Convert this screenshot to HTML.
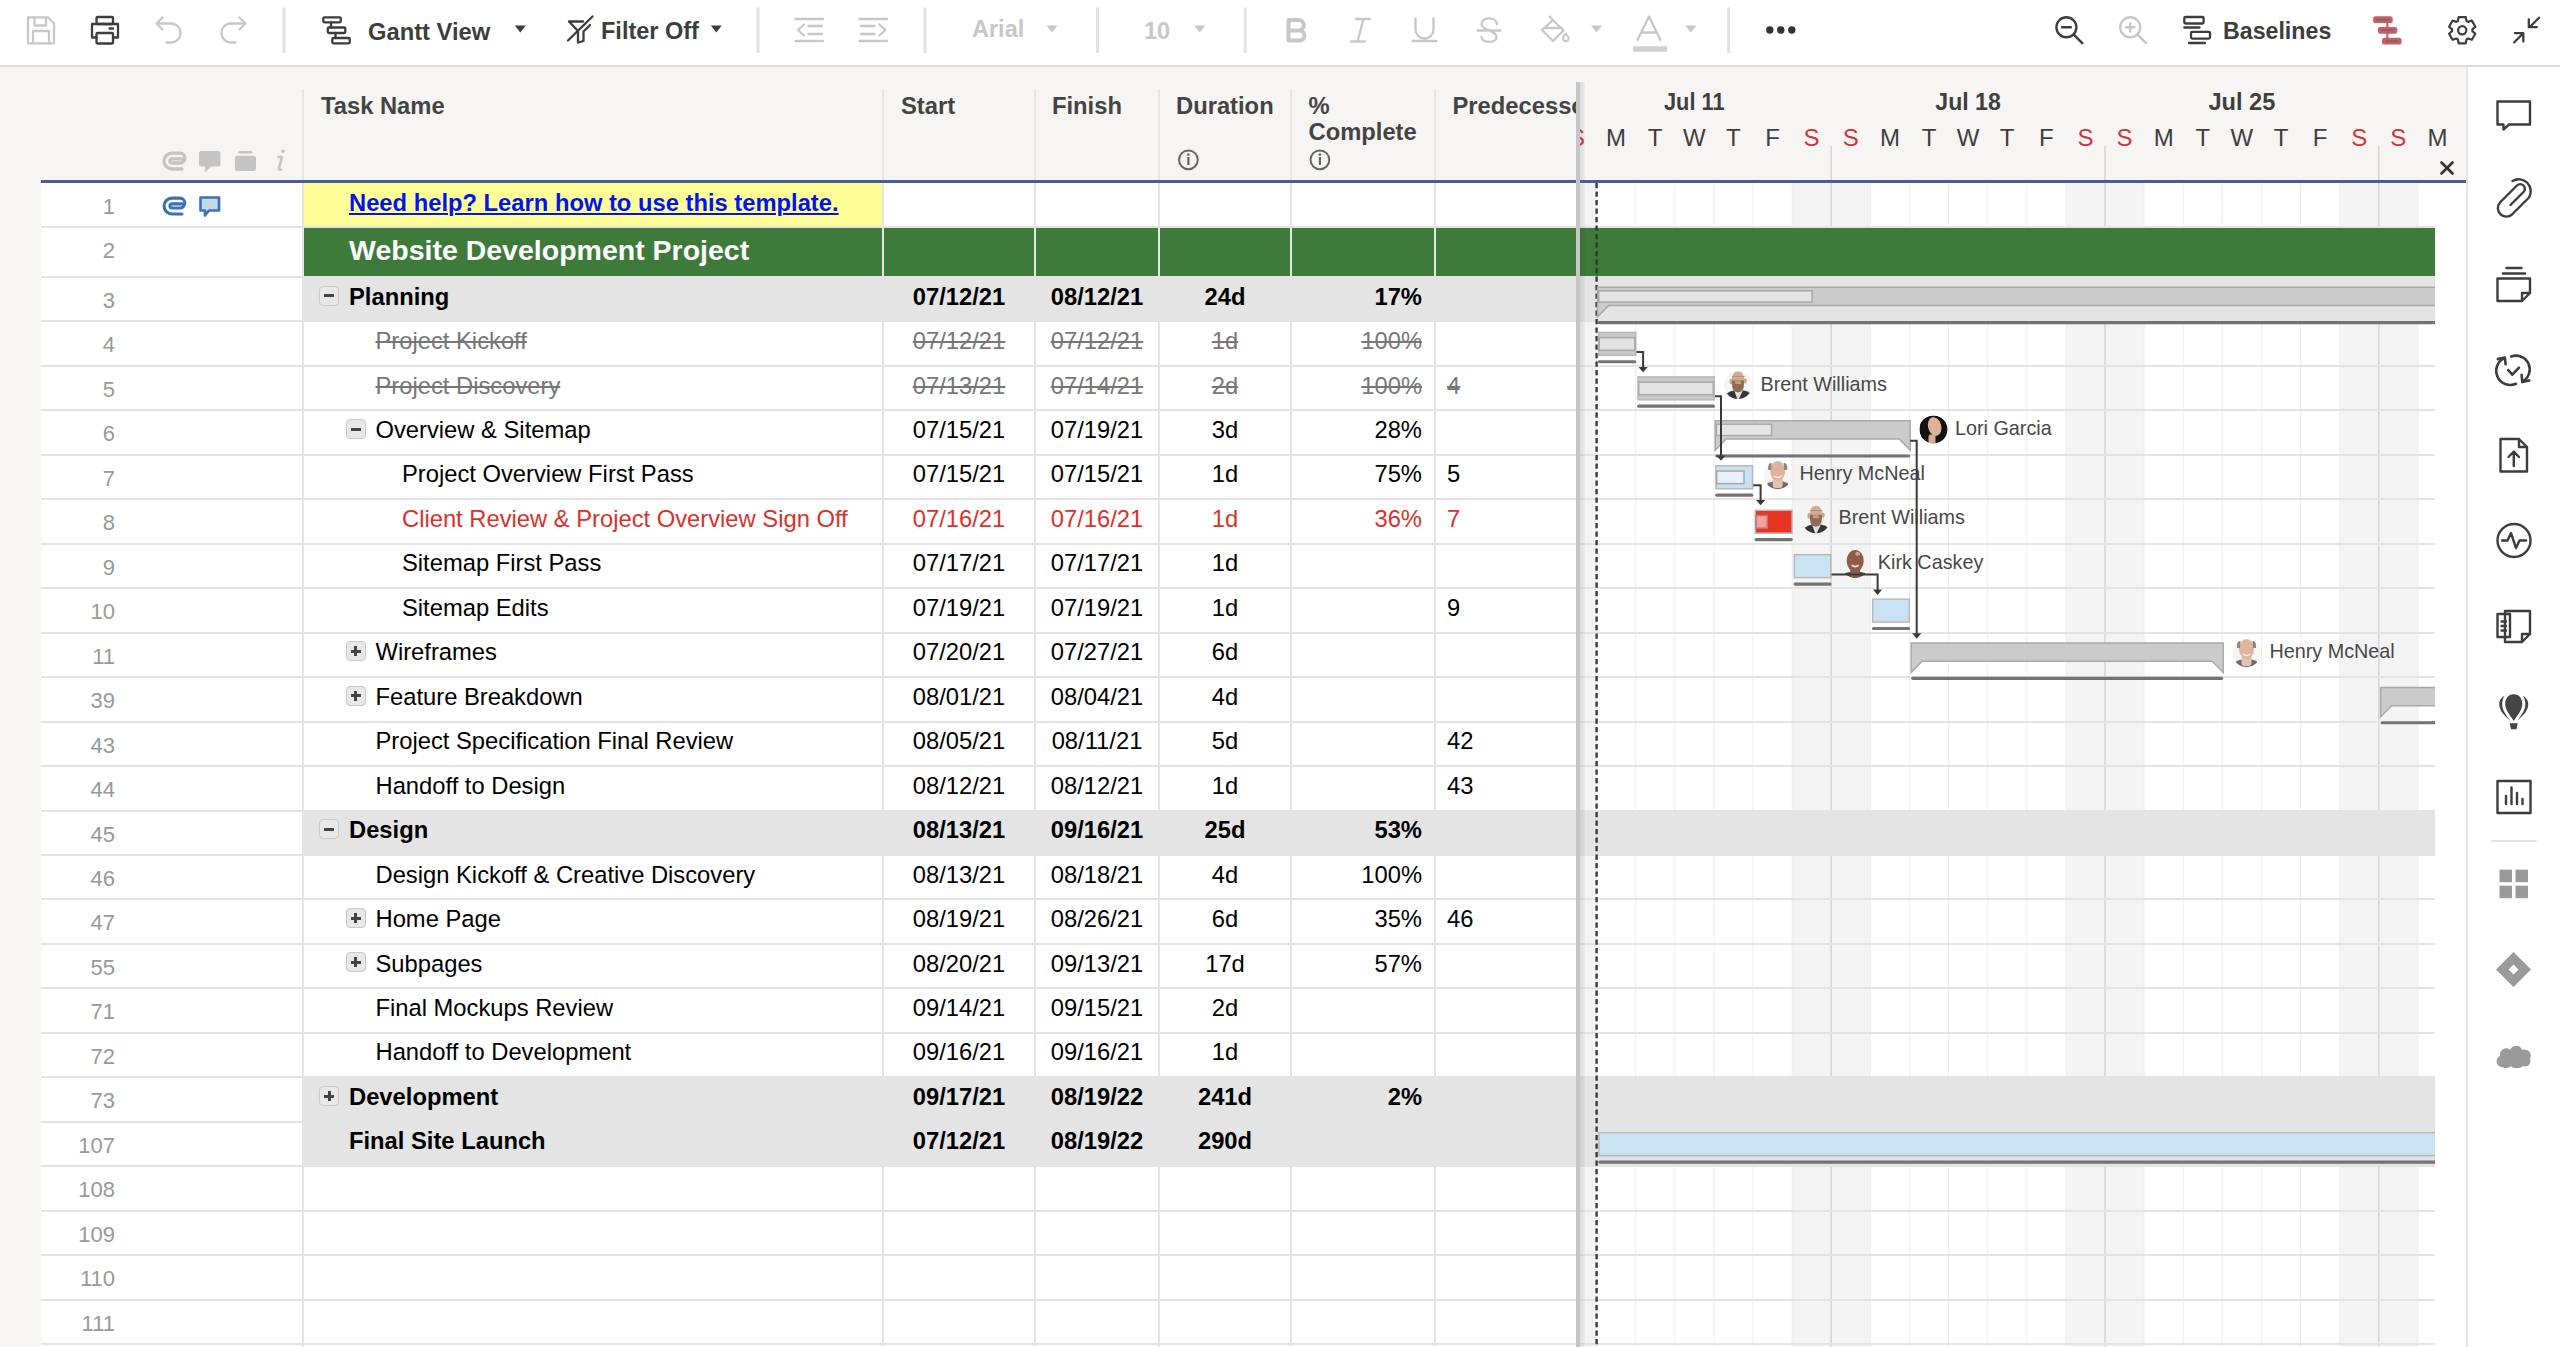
<!DOCTYPE html><html><head><meta charset="utf-8"><style>
*{box-sizing:border-box}
html,body{margin:0;padding:0}
body{width:2560px;height:1347px;overflow:hidden;position:relative;background:#f6f5f3;font-family:'Liberation Sans', sans-serif;}
.a{position:absolute}
.t{position:absolute;white-space:nowrap;line-height:normal}
</style></head><body>
<div class="a" style="left:0;top:0;width:2560px;height:66px;background:#fff"></div>
<div class="a" style="left:0;top:65px;width:2560px;height:2px;background:#dcdcdc"></div>
<div class="a" style="left:41px;top:183px;width:1535px;height:1164px;background:#fff"></div>
<div class="a" style="left:1580px;top:183px;width:886px;height:1164px;background:#fff"></div>
<div class="a" style="left:2466px;top:67px;width:94px;height:1280px;background:#fff;border-left:2px solid #e6e6e6"></div>
<div class="a" style="left:304px;top:183px;width:578px;height:43px;background:#fffd96"></div>
<div class="a" style="left:41px;top:226px;width:1535px;height:2px;background:#e4e4e4"></div>
<div class="a" style="left:304px;top:228px;width:1272px;height:48px;background:#3e7b3a"></div>
<div class="a" style="left:41px;top:276px;width:1535px;height:2px;background:#e4e4e4"></div>
<div class="a" style="left:304px;top:278px;width:1272px;height:42px;background:#e4e4e4"></div>
<div class="a" style="left:41px;top:320px;width:1535px;height:2px;background:#e4e4e4"></div>
<div class="a" style="left:41px;top:365px;width:1535px;height:2px;background:#e4e4e4"></div>
<div class="a" style="left:41px;top:409px;width:1535px;height:2px;background:#e4e4e4"></div>
<div class="a" style="left:41px;top:454px;width:1535px;height:2px;background:#e4e4e4"></div>
<div class="a" style="left:41px;top:498px;width:1535px;height:2px;background:#e4e4e4"></div>
<div class="a" style="left:41px;top:543px;width:1535px;height:2px;background:#e4e4e4"></div>
<div class="a" style="left:41px;top:587px;width:1535px;height:2px;background:#e4e4e4"></div>
<div class="a" style="left:41px;top:632px;width:1535px;height:2px;background:#e4e4e4"></div>
<div class="a" style="left:41px;top:676px;width:1535px;height:2px;background:#e4e4e4"></div>
<div class="a" style="left:41px;top:721px;width:1535px;height:2px;background:#e4e4e4"></div>
<div class="a" style="left:41px;top:765px;width:1535px;height:2px;background:#e4e4e4"></div>
<div class="a" style="left:41px;top:810px;width:1535px;height:2px;background:#e4e4e4"></div>
<div class="a" style="left:304px;top:812px;width:1272px;height:42px;background:#e4e4e4"></div>
<div class="a" style="left:41px;top:854px;width:1535px;height:2px;background:#e4e4e4"></div>
<div class="a" style="left:41px;top:898px;width:1535px;height:2px;background:#e4e4e4"></div>
<div class="a" style="left:41px;top:943px;width:1535px;height:2px;background:#e4e4e4"></div>
<div class="a" style="left:41px;top:987px;width:1535px;height:2px;background:#e4e4e4"></div>
<div class="a" style="left:41px;top:1032px;width:1535px;height:2px;background:#e4e4e4"></div>
<div class="a" style="left:41px;top:1076px;width:1535px;height:2px;background:#e4e4e4"></div>
<div class="a" style="left:304px;top:1078px;width:1272px;height:43px;background:#e4e4e4"></div>
<div class="a" style="left:41px;top:1121px;width:1535px;height:2px;background:#e4e4e4"></div>
<div class="a" style="left:304px;top:1123px;width:1272px;height:42px;background:#e4e4e4"></div>
<div class="a" style="left:41px;top:1165px;width:1535px;height:2px;background:#e4e4e4"></div>
<div class="a" style="left:41px;top:1210px;width:1535px;height:2px;background:#e4e4e4"></div>
<div class="a" style="left:41px;top:1254px;width:1535px;height:2px;background:#e4e4e4"></div>
<div class="a" style="left:41px;top:1299px;width:1535px;height:2px;background:#e4e4e4"></div>
<div class="a" style="left:41px;top:1343px;width:1535px;height:2px;background:#e4e4e4"></div>
<div class="a" style="left:302px;top:183px;width:2px;height:1164px;background:#e4e4e4"></div>
<div class="a" style="left:302px;top:89px;width:2px;height:91px;background:#e6e6e4"></div>
<div class="a" style="left:882px;top:183px;width:2px;height:1164px;background:#e4e4e4"></div>
<div class="a" style="left:882px;top:89px;width:2px;height:91px;background:#e6e6e4"></div>
<div class="a" style="left:1034px;top:183px;width:2px;height:1164px;background:#e4e4e4"></div>
<div class="a" style="left:1034px;top:89px;width:2px;height:91px;background:#e6e6e4"></div>
<div class="a" style="left:1158px;top:183px;width:2px;height:1164px;background:#e4e4e4"></div>
<div class="a" style="left:1158px;top:89px;width:2px;height:91px;background:#e6e6e4"></div>
<div class="a" style="left:1290px;top:183px;width:2px;height:1164px;background:#e4e4e4"></div>
<div class="a" style="left:1290px;top:89px;width:2px;height:91px;background:#e6e6e4"></div>
<div class="a" style="left:1434px;top:183px;width:2px;height:1164px;background:#e4e4e4"></div>
<div class="a" style="left:1434px;top:89px;width:2px;height:91px;background:#e6e6e4"></div>
<div class="t" style="right:2445px;top:194px;font-size:22px;color:#999">1</div>
<div class="t" style="left:349px;top:189px;font-size:23.75px;font-weight:bold;color:#0014ef;text-decoration:underline;text-decoration-thickness:2px;text-underline-offset:2px">Need help? Learn how to use this template.</div>
<div class="t" style="right:2445px;top:238px;font-size:22px;color:#999">2</div>
<div class="t" style="left:349px;top:234px;font-size:28.5px;font-weight:bold;color:#fff">Website Development Project</div>
<div class="t" style="right:2445px;top:288px;font-size:22px;color:#999">3</div>
<div class="a" style="left:319.0px;top:285.5px;width:20px;height:20px;border:1.5px solid #c9c9c9;border-radius:4px;background:#e8e8e8"></div>
<div class="a" style="left:324.0px;top:294.2px;width:10px;height:3px;background:#444"></div>
<div class="t" style="left:349.0px;top:283px;font-size:23.75px;font-weight:bold;color:#000;">Planning</div>
<div class="t" style="left:884px;width:150px;text-align:center;top:283px;font-size:23.75px;font-weight:bold;color:#000;">07/12/21</div>
<div class="t" style="left:1036px;width:122px;text-align:center;top:283px;font-size:23.75px;font-weight:bold;color:#000;">08/12/21</div>
<div class="t" style="left:1160px;width:130px;text-align:center;top:283px;font-size:23.75px;font-weight:bold;color:#000;">24d</div>
<div class="t" style="right:1138px;top:283px;font-size:23.75px;font-weight:bold;color:#000;">17%</div>
<div class="t" style="left:1447px;top:283px;font-size:23.75px;font-weight:bold;color:#000;"></div>
<div class="t" style="right:2445px;top:332px;font-size:22px;color:#999">4</div>
<div class="t" style="left:375.5px;top:327px;font-size:23.75px;font-weight:normal;color:#777;text-decoration:line-through;text-decoration-thickness:2px;">Project Kickoff</div>
<div class="t" style="left:884px;width:150px;text-align:center;top:327px;font-size:23.75px;font-weight:normal;color:#777;text-decoration:line-through;text-decoration-thickness:2px;">07/12/21</div>
<div class="t" style="left:1036px;width:122px;text-align:center;top:327px;font-size:23.75px;font-weight:normal;color:#777;text-decoration:line-through;text-decoration-thickness:2px;">07/12/21</div>
<div class="t" style="left:1160px;width:130px;text-align:center;top:327px;font-size:23.75px;font-weight:normal;color:#777;text-decoration:line-through;text-decoration-thickness:2px;">1d</div>
<div class="t" style="right:1138px;top:327px;font-size:23.75px;font-weight:normal;color:#777;text-decoration:line-through;text-decoration-thickness:2px;">100%</div>
<div class="t" style="left:1447px;top:327px;font-size:23.75px;font-weight:normal;color:#777;text-decoration:line-through;text-decoration-thickness:2px;"></div>
<div class="t" style="right:2445px;top:377px;font-size:22px;color:#999">5</div>
<div class="t" style="left:375.5px;top:372px;font-size:23.75px;font-weight:normal;color:#777;text-decoration:line-through;text-decoration-thickness:2px;">Project Discovery</div>
<div class="t" style="left:884px;width:150px;text-align:center;top:372px;font-size:23.75px;font-weight:normal;color:#777;text-decoration:line-through;text-decoration-thickness:2px;">07/13/21</div>
<div class="t" style="left:1036px;width:122px;text-align:center;top:372px;font-size:23.75px;font-weight:normal;color:#777;text-decoration:line-through;text-decoration-thickness:2px;">07/14/21</div>
<div class="t" style="left:1160px;width:130px;text-align:center;top:372px;font-size:23.75px;font-weight:normal;color:#777;text-decoration:line-through;text-decoration-thickness:2px;">2d</div>
<div class="t" style="right:1138px;top:372px;font-size:23.75px;font-weight:normal;color:#777;text-decoration:line-through;text-decoration-thickness:2px;">100%</div>
<div class="t" style="left:1447px;top:372px;font-size:23.75px;font-weight:normal;color:#777;text-decoration:line-through;text-decoration-thickness:2px;">4</div>
<div class="t" style="right:2445px;top:421px;font-size:22px;color:#999">6</div>
<div class="a" style="left:345.5px;top:418.9px;width:20px;height:20px;border:1.5px solid #c9c9c9;border-radius:4px;background:#e8e8e8"></div>
<div class="a" style="left:350.5px;top:427.6px;width:10px;height:3px;background:#444"></div>
<div class="t" style="left:375.5px;top:416px;font-size:23.75px;font-weight:normal;color:#000;">Overview &amp; Sitemap</div>
<div class="t" style="left:884px;width:150px;text-align:center;top:416px;font-size:23.75px;font-weight:normal;color:#000;">07/15/21</div>
<div class="t" style="left:1036px;width:122px;text-align:center;top:416px;font-size:23.75px;font-weight:normal;color:#000;">07/19/21</div>
<div class="t" style="left:1160px;width:130px;text-align:center;top:416px;font-size:23.75px;font-weight:normal;color:#000;">3d</div>
<div class="t" style="right:1138px;top:416px;font-size:23.75px;font-weight:normal;color:#000;">28%</div>
<div class="t" style="left:1447px;top:416px;font-size:23.75px;font-weight:normal;color:#000;"></div>
<div class="t" style="right:2445px;top:466px;font-size:22px;color:#999">7</div>
<div class="t" style="left:402.0px;top:460px;font-size:23.75px;font-weight:normal;color:#000;">Project Overview First Pass</div>
<div class="t" style="left:884px;width:150px;text-align:center;top:460px;font-size:23.75px;font-weight:normal;color:#000;">07/15/21</div>
<div class="t" style="left:1036px;width:122px;text-align:center;top:460px;font-size:23.75px;font-weight:normal;color:#000;">07/15/21</div>
<div class="t" style="left:1160px;width:130px;text-align:center;top:460px;font-size:23.75px;font-weight:normal;color:#000;">1d</div>
<div class="t" style="right:1138px;top:460px;font-size:23.75px;font-weight:normal;color:#000;">75%</div>
<div class="t" style="left:1447px;top:460px;font-size:23.75px;font-weight:normal;color:#000;">5</div>
<div class="t" style="right:2445px;top:510px;font-size:22px;color:#999">8</div>
<div class="t" style="left:402.0px;top:505px;font-size:23.75px;font-weight:normal;color:#d9322a;">Client Review &amp; Project Overview Sign Off</div>
<div class="t" style="left:884px;width:150px;text-align:center;top:505px;font-size:23.75px;font-weight:normal;color:#d9322a;">07/16/21</div>
<div class="t" style="left:1036px;width:122px;text-align:center;top:505px;font-size:23.75px;font-weight:normal;color:#d9322a;">07/16/21</div>
<div class="t" style="left:1160px;width:130px;text-align:center;top:505px;font-size:23.75px;font-weight:normal;color:#d9322a;">1d</div>
<div class="t" style="right:1138px;top:505px;font-size:23.75px;font-weight:normal;color:#d9322a;">36%</div>
<div class="t" style="left:1447px;top:505px;font-size:23.75px;font-weight:normal;color:#d9322a;">7</div>
<div class="t" style="right:2445px;top:555px;font-size:22px;color:#999">9</div>
<div class="t" style="left:402.0px;top:549px;font-size:23.75px;font-weight:normal;color:#000;">Sitemap First Pass</div>
<div class="t" style="left:884px;width:150px;text-align:center;top:549px;font-size:23.75px;font-weight:normal;color:#000;">07/17/21</div>
<div class="t" style="left:1036px;width:122px;text-align:center;top:549px;font-size:23.75px;font-weight:normal;color:#000;">07/17/21</div>
<div class="t" style="left:1160px;width:130px;text-align:center;top:549px;font-size:23.75px;font-weight:normal;color:#000;">1d</div>
<div class="t" style="right:1138px;top:549px;font-size:23.75px;font-weight:normal;color:#000;"></div>
<div class="t" style="left:1447px;top:549px;font-size:23.75px;font-weight:normal;color:#000;"></div>
<div class="t" style="right:2445px;top:599px;font-size:22px;color:#999">10</div>
<div class="t" style="left:402.0px;top:594px;font-size:23.75px;font-weight:normal;color:#000;">Sitemap Edits</div>
<div class="t" style="left:884px;width:150px;text-align:center;top:594px;font-size:23.75px;font-weight:normal;color:#000;">07/19/21</div>
<div class="t" style="left:1036px;width:122px;text-align:center;top:594px;font-size:23.75px;font-weight:normal;color:#000;">07/19/21</div>
<div class="t" style="left:1160px;width:130px;text-align:center;top:594px;font-size:23.75px;font-weight:normal;color:#000;">1d</div>
<div class="t" style="right:1138px;top:594px;font-size:23.75px;font-weight:normal;color:#000;"></div>
<div class="t" style="left:1447px;top:594px;font-size:23.75px;font-weight:normal;color:#000;">9</div>
<div class="t" style="right:2445px;top:644px;font-size:22px;color:#999">11</div>
<div class="a" style="left:345.5px;top:641.2px;width:20px;height:20px;border:1.5px solid #c9c9c9;border-radius:4px;background:#e8e8e8"></div>
<div class="a" style="left:350.5px;top:649.9px;width:10px;height:3px;background:#444"></div>
<div class="a" style="left:354.0px;top:646.2px;width:3px;height:10px;background:#444"></div>
<div class="t" style="left:375.5px;top:638px;font-size:23.75px;font-weight:normal;color:#000;">Wireframes</div>
<div class="t" style="left:884px;width:150px;text-align:center;top:638px;font-size:23.75px;font-weight:normal;color:#000;">07/20/21</div>
<div class="t" style="left:1036px;width:122px;text-align:center;top:638px;font-size:23.75px;font-weight:normal;color:#000;">07/27/21</div>
<div class="t" style="left:1160px;width:130px;text-align:center;top:638px;font-size:23.75px;font-weight:normal;color:#000;">6d</div>
<div class="t" style="right:1138px;top:638px;font-size:23.75px;font-weight:normal;color:#000;"></div>
<div class="t" style="left:1447px;top:638px;font-size:23.75px;font-weight:normal;color:#000;"></div>
<div class="t" style="right:2445px;top:688px;font-size:22px;color:#999">39</div>
<div class="a" style="left:345.5px;top:685.6px;width:20px;height:20px;border:1.5px solid #c9c9c9;border-radius:4px;background:#e8e8e8"></div>
<div class="a" style="left:350.5px;top:694.3px;width:10px;height:3px;background:#444"></div>
<div class="a" style="left:354.0px;top:690.6px;width:3px;height:10px;background:#444"></div>
<div class="t" style="left:375.5px;top:683px;font-size:23.75px;font-weight:normal;color:#000;">Feature Breakdown</div>
<div class="t" style="left:884px;width:150px;text-align:center;top:683px;font-size:23.75px;font-weight:normal;color:#000;">08/01/21</div>
<div class="t" style="left:1036px;width:122px;text-align:center;top:683px;font-size:23.75px;font-weight:normal;color:#000;">08/04/21</div>
<div class="t" style="left:1160px;width:130px;text-align:center;top:683px;font-size:23.75px;font-weight:normal;color:#000;">4d</div>
<div class="t" style="right:1138px;top:683px;font-size:23.75px;font-weight:normal;color:#000;"></div>
<div class="t" style="left:1447px;top:683px;font-size:23.75px;font-weight:normal;color:#000;"></div>
<div class="t" style="right:2445px;top:733px;font-size:22px;color:#999">43</div>
<div class="t" style="left:375.5px;top:727px;font-size:23.75px;font-weight:normal;color:#000;">Project Specification Final Review</div>
<div class="t" style="left:884px;width:150px;text-align:center;top:727px;font-size:23.75px;font-weight:normal;color:#000;">08/05/21</div>
<div class="t" style="left:1036px;width:122px;text-align:center;top:727px;font-size:23.75px;font-weight:normal;color:#000;">08/11/21</div>
<div class="t" style="left:1160px;width:130px;text-align:center;top:727px;font-size:23.75px;font-weight:normal;color:#000;">5d</div>
<div class="t" style="right:1138px;top:727px;font-size:23.75px;font-weight:normal;color:#000;"></div>
<div class="t" style="left:1447px;top:727px;font-size:23.75px;font-weight:normal;color:#000;">42</div>
<div class="t" style="right:2445px;top:777px;font-size:22px;color:#999">44</div>
<div class="t" style="left:375.5px;top:772px;font-size:23.75px;font-weight:normal;color:#000;">Handoff to Design</div>
<div class="t" style="left:884px;width:150px;text-align:center;top:772px;font-size:23.75px;font-weight:normal;color:#000;">08/12/21</div>
<div class="t" style="left:1036px;width:122px;text-align:center;top:772px;font-size:23.75px;font-weight:normal;color:#000;">08/12/21</div>
<div class="t" style="left:1160px;width:130px;text-align:center;top:772px;font-size:23.75px;font-weight:normal;color:#000;">1d</div>
<div class="t" style="right:1138px;top:772px;font-size:23.75px;font-weight:normal;color:#000;"></div>
<div class="t" style="left:1447px;top:772px;font-size:23.75px;font-weight:normal;color:#000;">43</div>
<div class="t" style="right:2445px;top:822px;font-size:22px;color:#999">45</div>
<div class="a" style="left:319.0px;top:819.0px;width:20px;height:20px;border:1.5px solid #c9c9c9;border-radius:4px;background:#e8e8e8"></div>
<div class="a" style="left:324.0px;top:827.7px;width:10px;height:3px;background:#444"></div>
<div class="t" style="left:349.0px;top:816px;font-size:23.75px;font-weight:bold;color:#000;">Design</div>
<div class="t" style="left:884px;width:150px;text-align:center;top:816px;font-size:23.75px;font-weight:bold;color:#000;">08/13/21</div>
<div class="t" style="left:1036px;width:122px;text-align:center;top:816px;font-size:23.75px;font-weight:bold;color:#000;">09/16/21</div>
<div class="t" style="left:1160px;width:130px;text-align:center;top:816px;font-size:23.75px;font-weight:bold;color:#000;">25d</div>
<div class="t" style="right:1138px;top:816px;font-size:23.75px;font-weight:bold;color:#000;">53%</div>
<div class="t" style="left:1447px;top:816px;font-size:23.75px;font-weight:bold;color:#000;"></div>
<div class="t" style="right:2445px;top:866px;font-size:22px;color:#999">46</div>
<div class="t" style="left:375.5px;top:861px;font-size:23.75px;font-weight:normal;color:#000;">Design Kickoff &amp; Creative Discovery</div>
<div class="t" style="left:884px;width:150px;text-align:center;top:861px;font-size:23.75px;font-weight:normal;color:#000;">08/13/21</div>
<div class="t" style="left:1036px;width:122px;text-align:center;top:861px;font-size:23.75px;font-weight:normal;color:#000;">08/18/21</div>
<div class="t" style="left:1160px;width:130px;text-align:center;top:861px;font-size:23.75px;font-weight:normal;color:#000;">4d</div>
<div class="t" style="right:1138px;top:861px;font-size:23.75px;font-weight:normal;color:#000;">100%</div>
<div class="t" style="left:1447px;top:861px;font-size:23.75px;font-weight:normal;color:#000;"></div>
<div class="t" style="right:2445px;top:910px;font-size:22px;color:#999">47</div>
<div class="a" style="left:345.5px;top:907.9px;width:20px;height:20px;border:1.5px solid #c9c9c9;border-radius:4px;background:#e8e8e8"></div>
<div class="a" style="left:350.5px;top:916.6px;width:10px;height:3px;background:#444"></div>
<div class="a" style="left:354.0px;top:912.9px;width:3px;height:10px;background:#444"></div>
<div class="t" style="left:375.5px;top:905px;font-size:23.75px;font-weight:normal;color:#000;">Home Page</div>
<div class="t" style="left:884px;width:150px;text-align:center;top:905px;font-size:23.75px;font-weight:normal;color:#000;">08/19/21</div>
<div class="t" style="left:1036px;width:122px;text-align:center;top:905px;font-size:23.75px;font-weight:normal;color:#000;">08/26/21</div>
<div class="t" style="left:1160px;width:130px;text-align:center;top:905px;font-size:23.75px;font-weight:normal;color:#000;">6d</div>
<div class="t" style="right:1138px;top:905px;font-size:23.75px;font-weight:normal;color:#000;">35%</div>
<div class="t" style="left:1447px;top:905px;font-size:23.75px;font-weight:normal;color:#000;">46</div>
<div class="t" style="right:2445px;top:955px;font-size:22px;color:#999">55</div>
<div class="a" style="left:345.5px;top:952.4px;width:20px;height:20px;border:1.5px solid #c9c9c9;border-radius:4px;background:#e8e8e8"></div>
<div class="a" style="left:350.5px;top:961.1px;width:10px;height:3px;background:#444"></div>
<div class="a" style="left:354.0px;top:957.4px;width:3px;height:10px;background:#444"></div>
<div class="t" style="left:375.5px;top:950px;font-size:23.75px;font-weight:normal;color:#000;">Subpages</div>
<div class="t" style="left:884px;width:150px;text-align:center;top:950px;font-size:23.75px;font-weight:normal;color:#000;">08/20/21</div>
<div class="t" style="left:1036px;width:122px;text-align:center;top:950px;font-size:23.75px;font-weight:normal;color:#000;">09/13/21</div>
<div class="t" style="left:1160px;width:130px;text-align:center;top:950px;font-size:23.75px;font-weight:normal;color:#000;">17d</div>
<div class="t" style="right:1138px;top:950px;font-size:23.75px;font-weight:normal;color:#000;">57%</div>
<div class="t" style="left:1447px;top:950px;font-size:23.75px;font-weight:normal;color:#000;"></div>
<div class="t" style="right:2445px;top:999px;font-size:22px;color:#999">71</div>
<div class="t" style="left:375.5px;top:994px;font-size:23.75px;font-weight:normal;color:#000;">Final Mockups Review</div>
<div class="t" style="left:884px;width:150px;text-align:center;top:994px;font-size:23.75px;font-weight:normal;color:#000;">09/14/21</div>
<div class="t" style="left:1036px;width:122px;text-align:center;top:994px;font-size:23.75px;font-weight:normal;color:#000;">09/15/21</div>
<div class="t" style="left:1160px;width:130px;text-align:center;top:994px;font-size:23.75px;font-weight:normal;color:#000;">2d</div>
<div class="t" style="right:1138px;top:994px;font-size:23.75px;font-weight:normal;color:#000;"></div>
<div class="t" style="left:1447px;top:994px;font-size:23.75px;font-weight:normal;color:#000;"></div>
<div class="t" style="right:2445px;top:1044px;font-size:22px;color:#999">72</div>
<div class="t" style="left:375.5px;top:1038px;font-size:23.75px;font-weight:normal;color:#000;">Handoff to Development</div>
<div class="t" style="left:884px;width:150px;text-align:center;top:1038px;font-size:23.75px;font-weight:normal;color:#000;">09/16/21</div>
<div class="t" style="left:1036px;width:122px;text-align:center;top:1038px;font-size:23.75px;font-weight:normal;color:#000;">09/16/21</div>
<div class="t" style="left:1160px;width:130px;text-align:center;top:1038px;font-size:23.75px;font-weight:normal;color:#000;">1d</div>
<div class="t" style="right:1138px;top:1038px;font-size:23.75px;font-weight:normal;color:#000;"></div>
<div class="t" style="left:1447px;top:1038px;font-size:23.75px;font-weight:normal;color:#000;"></div>
<div class="t" style="right:2445px;top:1088px;font-size:22px;color:#999">73</div>
<div class="a" style="left:319.0px;top:1085.8px;width:20px;height:20px;border:1.5px solid #c9c9c9;border-radius:4px;background:#e8e8e8"></div>
<div class="a" style="left:324.0px;top:1094.5px;width:10px;height:3px;background:#444"></div>
<div class="a" style="left:327.5px;top:1090.8px;width:3px;height:10px;background:#444"></div>
<div class="t" style="left:349.0px;top:1083px;font-size:23.75px;font-weight:bold;color:#000;">Development</div>
<div class="t" style="left:884px;width:150px;text-align:center;top:1083px;font-size:23.75px;font-weight:bold;color:#000;">09/17/21</div>
<div class="t" style="left:1036px;width:122px;text-align:center;top:1083px;font-size:23.75px;font-weight:bold;color:#000;">08/19/22</div>
<div class="t" style="left:1160px;width:130px;text-align:center;top:1083px;font-size:23.75px;font-weight:bold;color:#000;">241d</div>
<div class="t" style="right:1138px;top:1083px;font-size:23.75px;font-weight:bold;color:#000;">2%</div>
<div class="t" style="left:1447px;top:1083px;font-size:23.75px;font-weight:bold;color:#000;"></div>
<div class="t" style="right:2445px;top:1133px;font-size:22px;color:#999">107</div>
<div class="t" style="left:349.0px;top:1127px;font-size:23.75px;font-weight:bold;color:#000;">Final Site Launch</div>
<div class="t" style="left:884px;width:150px;text-align:center;top:1127px;font-size:23.75px;font-weight:bold;color:#000;">07/12/21</div>
<div class="t" style="left:1036px;width:122px;text-align:center;top:1127px;font-size:23.75px;font-weight:bold;color:#000;">08/19/22</div>
<div class="t" style="left:1160px;width:130px;text-align:center;top:1127px;font-size:23.75px;font-weight:bold;color:#000;">290d</div>
<div class="t" style="right:1138px;top:1127px;font-size:23.75px;font-weight:bold;color:#000;"></div>
<div class="t" style="left:1447px;top:1127px;font-size:23.75px;font-weight:bold;color:#000;"></div>
<div class="t" style="right:2445px;top:1177px;font-size:22px;color:#999">108</div>
<div class="t" style="right:2445px;top:1222px;font-size:22px;color:#999">109</div>
<div class="t" style="right:2445px;top:1266px;font-size:22px;color:#999">110</div>
<div class="t" style="right:2445px;top:1311px;font-size:22px;color:#999">111</div>
<svg class="a" style="left:0;top:0" width="300" height="230" viewBox="0 0 300 230">
<path d="M181.9 214 H172 A7.95 7.95 0 0 1 172 198.1 H179.85 A4.95 4.95 0 0 1 179.85 208 H172 A2.05 2.05 0 0 1 172 203.9 H181.9" fill="none" stroke="#3a72b6" stroke-width="3.1" stroke-linecap="round"/>
<path d="M200.5 197.5 H219 V210.5 H209 L205 215.5 V210.5 H200.5 Z" fill="#c6d7e7" stroke="#3a72b6" stroke-width="2.6" stroke-linejoin="round"/>
</svg>
<div class="t" style="left:321px;top:92px;font-size:23.75px;font-weight:bold;color:#444">Task Name</div>
<div class="t" style="left:901px;top:92px;font-size:23.75px;font-weight:bold;color:#444">Start</div>
<div class="t" style="left:1052px;top:92px;font-size:23.75px;font-weight:bold;color:#444">Finish</div>
<div class="t" style="left:1176px;top:92px;font-size:23.75px;font-weight:bold;color:#444">Duration</div>
<div class="t" style="left:1308.5px;top:92px;font-size:23.75px;font-weight:bold;color:#444">%</div>
<div class="t" style="left:1308.5px;top:118px;font-size:23.75px;font-weight:bold;color:#444">Complete</div>
<div class="a" style="left:1436px;top:70px;width:140px;height:110px;overflow:hidden"><div class="t" style="left:16.5px;top:22px;font-size:23.75px;font-weight:bold;color:#444">Predecessors</div></div>
<svg class="a" style="left:1170px;top:145px" width="170" height="30" viewBox="1170 145 170 30">
<circle cx="1188.4" cy="159.8" r="9.4" fill="none" stroke="#666" stroke-width="2"/>
<circle cx="1188.4" cy="154.6" r="1.3" fill="#666"/><rect x="1187.3" y="157" width="2.2" height="8" fill="#666"/>
<circle cx="1319.9" cy="159.8" r="9.4" fill="none" stroke="#666" stroke-width="2"/>
<circle cx="1319.9" cy="154.6" r="1.3" fill="#666"/><rect x="1318.8" y="157" width="2.2" height="8" fill="#666"/>
</svg>
<svg class="a" style="left:150px;top:140px" width="150" height="40" viewBox="150 140 150 40">
<path d="M181.9 169 H172 A7.95 7.95 0 0 1 172 153.1 H179.85 A4.95 4.95 0 0 1 179.85 163 H172 A2.05 2.05 0 0 1 172 158.9 H181.9" fill="none" stroke="#c4c4c4" stroke-width="3.4" stroke-linecap="round"/>
<path d="M201 151 H218 Q220.5 151 220.5 153.5 V164 Q220.5 166.5 218 166.5 H211 L205 172.5 V166.5 H201.5 Q199 166.5 199 164 V153.5 Q199 151 201.5 151 Z" fill="#c4c4c4"/>
<rect x="238.3" y="151" width="14.2" height="2.6" rx="1.3" fill="#c4c4c4"/>
<rect x="234.9" y="155.8" width="21.1" height="15.1" rx="2.5" fill="#c4c4c4"/>
<circle cx="283" cy="151.3" r="1.8" fill="#c4c4c4"/>
<path d="M278.5 157 H282 L279 168 Q278.5 170 281 169.5" fill="none" stroke="#c4c4c4" stroke-width="2.6" stroke-linecap="round" stroke-linejoin="round"/>
</svg>
<div class="a" style="left:41px;top:180px;width:2425px;height:3px;background:#475f96"></div>
<svg class="a" style="left:0;top:0" width="2560" height="1347" viewBox="0 0 2560 1347">
<defs><clipPath id="gb"><rect x="1580" y="183" width="855" height="1164"/></clipPath><clipPath id="gh"><rect x="1580" y="67" width="886" height="113"/></clipPath></defs>
<g clip-path="url(#gh)" font-family="Liberation Sans, sans-serif">
<text x="1664.0" y="110.3" font-size="24" font-weight="bold" fill="#3f3f3f" textLength="60.5" lengthAdjust="spacingAndGlyphs">Jul 11</text>
<text x="1935.3" y="110.3" font-size="24" font-weight="bold" fill="#3f3f3f" textLength="65.5" lengthAdjust="spacingAndGlyphs">Jul 18</text>
<text x="2208.4" y="110.3" font-size="24" font-weight="bold" fill="#3f3f3f" textLength="67" lengthAdjust="spacingAndGlyphs">Jul 25</text>
<text x="1576.9" y="145.8" text-anchor="middle" font-size="24" fill="#d1343a">S</text>
<text x="1616.1" y="145.8" text-anchor="middle" font-size="24" fill="#3f3f3f">M</text>
<text x="1655.2" y="145.8" text-anchor="middle" font-size="24" fill="#3f3f3f">T</text>
<text x="1694.3" y="145.8" text-anchor="middle" font-size="24" fill="#3f3f3f">W</text>
<text x="1733.4" y="145.8" text-anchor="middle" font-size="24" fill="#3f3f3f">T</text>
<text x="1772.5" y="145.8" text-anchor="middle" font-size="24" fill="#3f3f3f">F</text>
<text x="1811.6" y="145.8" text-anchor="middle" font-size="24" fill="#d1343a">S</text>
<text x="1850.7" y="145.8" text-anchor="middle" font-size="24" fill="#d1343a">S</text>
<text x="1889.9" y="145.8" text-anchor="middle" font-size="24" fill="#3f3f3f">M</text>
<text x="1929.0" y="145.8" text-anchor="middle" font-size="24" fill="#3f3f3f">T</text>
<text x="1968.1" y="145.8" text-anchor="middle" font-size="24" fill="#3f3f3f">W</text>
<text x="2007.2" y="145.8" text-anchor="middle" font-size="24" fill="#3f3f3f">T</text>
<text x="2046.3" y="145.8" text-anchor="middle" font-size="24" fill="#3f3f3f">F</text>
<text x="2085.4" y="145.8" text-anchor="middle" font-size="24" fill="#d1343a">S</text>
<text x="2124.5" y="145.8" text-anchor="middle" font-size="24" fill="#d1343a">S</text>
<text x="2163.7" y="145.8" text-anchor="middle" font-size="24" fill="#3f3f3f">M</text>
<text x="2202.8" y="145.8" text-anchor="middle" font-size="24" fill="#3f3f3f">T</text>
<text x="2241.9" y="145.8" text-anchor="middle" font-size="24" fill="#3f3f3f">W</text>
<text x="2281.0" y="145.8" text-anchor="middle" font-size="24" fill="#3f3f3f">T</text>
<text x="2320.1" y="145.8" text-anchor="middle" font-size="24" fill="#3f3f3f">F</text>
<text x="2359.2" y="145.8" text-anchor="middle" font-size="24" fill="#d1343a">S</text>
<text x="2398.3" y="145.8" text-anchor="middle" font-size="24" fill="#d1343a">S</text>
<text x="2437.5" y="145.8" text-anchor="middle" font-size="24" fill="#3f3f3f">M</text>
<rect x="1830.43" y="146" width="1.5" height="34" fill="#d4d4d4"/>
<rect x="2104.23" y="146" width="1.5" height="34" fill="#d4d4d4"/>
<rect x="2378.03" y="146" width="1.5" height="34" fill="#d4d4d4"/>
</g>
<path d="M2441.5 162.5 L2452.5 173.5 M2452.5 162.5 L2441.5 173.5" stroke="#333" stroke-width="2.6" stroke-linecap="round"/>
<g clip-path="url(#gb)">
<rect x="1557.39" y="183" width="39.114" height="1164" fill="#f4f4f4"/>
<rect x="1792.07" y="183" width="39.114" height="1164" fill="#f4f4f4"/>
<rect x="1831.18" y="183" width="39.114" height="1164" fill="#f4f4f4"/>
<rect x="2065.87" y="183" width="39.114" height="1164" fill="#f4f4f4"/>
<rect x="2104.98" y="183" width="39.114" height="1164" fill="#f4f4f4"/>
<rect x="2339.67" y="183" width="39.114" height="1164" fill="#f4f4f4"/>
<rect x="2378.78" y="183" width="39.114" height="1164" fill="#f4f4f4"/>
<rect x="1596.00" y="183" width="1" height="1164" fill="#f0eded"/>
<rect x="1635.11" y="183" width="1" height="1164" fill="#f0eded"/>
<rect x="1674.23" y="183" width="1" height="1164" fill="#f0eded"/>
<rect x="1713.34" y="183" width="1" height="1164" fill="#f0eded"/>
<rect x="1752.46" y="183" width="1" height="1164" fill="#f0eded"/>
<rect x="1791.57" y="183" width="1" height="1164" fill="#f0eded"/>
<rect x="1869.80" y="183" width="1" height="1164" fill="#f0eded"/>
<rect x="1908.91" y="183" width="1" height="1164" fill="#f0eded"/>
<rect x="1948.03" y="183" width="1" height="1164" fill="#f0eded"/>
<rect x="1987.14" y="183" width="1" height="1164" fill="#f0eded"/>
<rect x="2026.25" y="183" width="1" height="1164" fill="#f0eded"/>
<rect x="2065.37" y="183" width="1" height="1164" fill="#f0eded"/>
<rect x="2143.60" y="183" width="1" height="1164" fill="#f0eded"/>
<rect x="2182.71" y="183" width="1" height="1164" fill="#f0eded"/>
<rect x="2221.82" y="183" width="1" height="1164" fill="#f0eded"/>
<rect x="2260.94" y="183" width="1" height="1164" fill="#f0eded"/>
<rect x="2300.05" y="183" width="1" height="1164" fill="#f0eded"/>
<rect x="2339.17" y="183" width="1" height="1164" fill="#f0eded"/>
<rect x="2417.39" y="183" width="1" height="1164" fill="#f0eded"/>
<rect x="1556.64" y="183" width="1.5" height="1164" fill="#d6d6d6"/>
<rect x="1830.43" y="183" width="1.5" height="1164" fill="#d6d6d6"/>
<rect x="2104.23" y="183" width="1.5" height="1164" fill="#d6d6d6"/>
<rect x="2378.03" y="183" width="1.5" height="1164" fill="#d6d6d6"/>
<rect x="1580" y="228" width="855" height="48" fill="#3e7b3a"/>
<rect x="1580" y="278" width="855" height="42" fill="#e4e4e4"/>
<rect x="1580" y="812" width="855" height="42" fill="#e4e4e4"/>
<rect x="1580" y="1078" width="855" height="43" fill="#e4e4e4"/>
<rect x="1580" y="1123" width="855" height="42" fill="#e4e4e4"/>
<rect x="1580" y="226" width="855" height="2" fill="#e4e4e4"/>
<rect x="1580" y="276" width="855" height="2" fill="#e4e4e4"/>
<rect x="1580" y="320" width="855" height="2" fill="#e4e4e4"/>
<rect x="1580" y="365" width="855" height="2" fill="#e4e4e4"/>
<rect x="1580" y="409" width="855" height="2" fill="#e4e4e4"/>
<rect x="1580" y="454" width="855" height="2" fill="#e4e4e4"/>
<rect x="1580" y="498" width="855" height="2" fill="#e4e4e4"/>
<rect x="1580" y="543" width="855" height="2" fill="#e4e4e4"/>
<rect x="1580" y="587" width="855" height="2" fill="#e4e4e4"/>
<rect x="1580" y="632" width="855" height="2" fill="#e4e4e4"/>
<rect x="1580" y="676" width="855" height="2" fill="#e4e4e4"/>
<rect x="1580" y="721" width="855" height="2" fill="#e4e4e4"/>
<rect x="1580" y="765" width="855" height="2" fill="#e4e4e4"/>
<rect x="1580" y="810" width="855" height="2" fill="#e4e4e4"/>
<rect x="1580" y="854" width="855" height="2" fill="#e4e4e4"/>
<rect x="1580" y="898" width="855" height="2" fill="#e4e4e4"/>
<rect x="1580" y="943" width="855" height="2" fill="#e4e4e4"/>
<rect x="1580" y="987" width="855" height="2" fill="#e4e4e4"/>
<rect x="1580" y="1032" width="855" height="2" fill="#e4e4e4"/>
<rect x="1580" y="1076" width="855" height="2" fill="#e4e4e4"/>
<rect x="1580" y="1121" width="855" height="2" fill="#e4e4e4"/>
<rect x="1580" y="1165" width="855" height="2" fill="#e4e4e4"/>
<rect x="1580" y="1210" width="855" height="2" fill="#e4e4e4"/>
<rect x="1580" y="1254" width="855" height="2" fill="#e4e4e4"/>
<rect x="1580" y="1299" width="855" height="2" fill="#e4e4e4"/>
<rect x="1580" y="1343" width="855" height="2" fill="#e4e4e4"/>
</g>
<rect x="1580" y="228" width="855" height="48" fill="#3e7b3a"/>
<g clip-path="url(#gb)">
<line x1="1596.6" y1="183" x2="1596.6" y2="1347" stroke="#353535" stroke-width="2.3" stroke-dasharray="5.3 3.2"/>
<path d="M1597.50 287.30 L2470.00 287.30 L2470.00 305.60 L1608.50 305.60 L1597.50 316.80 Z" fill="#cbcbcb" stroke="#a9a9a9" stroke-width="1.5" stroke-linejoin="miter"/>
<rect x="1598.70" y="290.80" width="213.30" height="11.3" fill="#e5e5e5" stroke="#a9a9a9" stroke-width="1.5"/>
<rect x="1597.50" y="321.00" width="872.50" height="3.2" rx="1.6" fill="#737373"/>
<rect x="1598.55" y="332.41" width="37.20" height="22.90" fill="#c8c8c8" stroke="#b9b9b9" stroke-width="1.5"/>
<rect x="1599.30" y="337.66" width="35.50" height="12.60" fill="#e3e3e3" stroke="#a8a8a8" stroke-width="1.5"/>
<rect x="1597.80" y="360.16" width="38.70" height="3.2" rx="1.6" fill="#737373"/>
<rect x="1637.95" y="376.87" width="76.30" height="22.90" fill="#c8c8c8" stroke="#b9b9b9" stroke-width="1.5"/>
<rect x="1638.70" y="382.12" width="74.60" height="12.60" fill="#e3e3e3" stroke="#a8a8a8" stroke-width="1.5"/>
<rect x="1637.20" y="404.62" width="77.80" height="3.2" rx="1.6" fill="#737373"/>
<text x="1760.5" y="390.7" font-family="Liberation Sans, sans-serif" font-size="19.8" fill="#474747">Brent Williams</text>
<path d="M1715.20 420.68 L1910.20 420.68 L1910.20 450.18 L1899.20 438.98 L1726.20 438.98 L1715.20 450.18 Z" fill="#cbcbcb" stroke="#a9a9a9" stroke-width="1.5" stroke-linejoin="miter"/>
<rect x="1716.40" y="424.18" width="55.20" height="11.3" fill="#e5e5e5" stroke="#a9a9a9" stroke-width="1.5"/>
<rect x="1715.20" y="454.38" width="195.00" height="3.2" rx="1.6" fill="#737373"/>
<text x="1955" y="435.2" font-family="Liberation Sans, sans-serif" font-size="19.8" fill="#474747">Lori Garcia</text>
<rect x="1715.95" y="465.79" width="36.60" height="22.90" fill="#c9e2f4" stroke="#b9b9b9" stroke-width="1.5"/>
<rect x="1716.70" y="471.04" width="27.30" height="12.60" fill="#e6f2fb" stroke="#a8a8a8" stroke-width="1.5"/>
<rect x="1715.20" y="493.54" width="38.10" height="3.2" rx="1.6" fill="#737373"/>
<text x="1799.5" y="479.6" font-family="Liberation Sans, sans-serif" font-size="19.8" fill="#474747">Henry McNeal</text>
<rect x="1755.25" y="510.25" width="36.80" height="22.90" fill="#e93323" stroke="#b9b9b9" stroke-width="1.5"/>
<rect x="1756.00" y="515.50" width="11.30" height="12.60" fill="#f5a09a" stroke="#b07a78" stroke-width="1.5"/>
<rect x="1754.50" y="538.00" width="38.30" height="3.2" rx="1.6" fill="#737373"/>
<text x="1838.5" y="524.1" font-family="Liberation Sans, sans-serif" font-size="19.8" fill="#474747">Brent Williams</text>
<rect x="1794.35" y="554.71" width="36.40" height="22.90" fill="#c9e2f4" stroke="#b9b9b9" stroke-width="1.5"/>
<rect x="1793.60" y="582.46" width="37.90" height="3.2" rx="1.6" fill="#737373"/>
<text x="1877.8" y="568.6" font-family="Liberation Sans, sans-serif" font-size="19.8" fill="#474747">Kirk Caskey</text>
<rect x="1872.65" y="599.17" width="36.70" height="22.90" fill="#c9e2f4" stroke="#b9b9b9" stroke-width="1.5"/>
<rect x="1871.90" y="626.92" width="38.20" height="3.2" rx="1.6" fill="#737373"/>
<path d="M1911.20 642.98 L2223.20 642.98 L2223.20 672.48 L2212.20 661.28 L1922.20 661.28 L1911.20 672.48 Z" fill="#cbcbcb" stroke="#a9a9a9" stroke-width="1.5" stroke-linejoin="miter"/>
<rect x="1911.20" y="676.68" width="312.00" height="3.2" rx="1.6" fill="#737373"/>
<text x="2269.4" y="657.5" font-family="Liberation Sans, sans-serif" font-size="19.8" fill="#474747">Henry McNeal</text>
<path d="M2380.60 687.44 L2600.00 687.44 L2600.00 705.74 L2391.60 705.74 L2380.60 716.94 Z" fill="#cbcbcb" stroke="#a9a9a9" stroke-width="1.5" stroke-linejoin="miter"/>
<rect x="2380.60" y="721.14" width="219.40" height="3.2" rx="1.6" fill="#737373"/>
<rect x="1598.95" y="1132.69" width="1000.30" height="22.90" fill="#c9e2f4" stroke="#b9b9b9" stroke-width="1.5"/>
<rect x="1598.20" y="1160.44" width="1001.80" height="3.2" rx="1.6" fill="#737373"/>
<clipPath id="av1738385"><circle cx="1738" cy="385" r="14.1"/></clipPath><g clip-path="url(#av1738385)">
<circle cx="1738" cy="385" r="14.1" fill="#f6f5f4"/>
<path d="M1724 401 L1726 394 Q1730 391 1735 390 H1742 Q1747 391 1750 393 L1752 401 Z" fill="#2f3746"/>
<path d="M1734 390 L1738 401 L1743 390 Z" fill="#e9dcd3"/>
<ellipse cx="1731.5" cy="381.5" rx="2" ry="3" fill="#d4a486"/><ellipse cx="1745" cy="381" rx="1.8" ry="2.8" fill="#d4a486"/>
<path d="M1732 381 Q1731.5 371.5 1738 371.5 Q1744.5 371.5 1744 381 Z" fill="#d8aa8c"/>
<path d="M1732 380.5 H1744 V384 Q1744 392 1738 392.5 Q1732 392 1732 384 Z" fill="#8e6b57"/>
<rect x="1735" y="381" width="6" height="3" fill="#c99a7e"/>
<path d="M1732 376.5 H1744.5" stroke="#9a9a9a" stroke-width="1.2"/>
</g>
<clipPath id="av1933429"><circle cx="1933.5" cy="429.5" r="14.1"/></clipPath><g clip-path="url(#av1933429)">
<circle cx="1933.5" cy="429.5" r="14.1" fill="#f6f5f4"/>
<circle cx="1933.5" cy="429.5" r="14.1" fill="#141110"/>
<rect x="1928.5" y="434.5" width="7" height="10" fill="#d3ab90"/>
<ellipse cx="1934.7" cy="426.5" rx="6.6" ry="9.5" transform="rotate(-15 1934.7 426.5)" fill="#dcb39a"/>
<path d="M1926.5 416.5 Q1923.5 429.5 1929.5 435.5 L1921.5 439.5 L1919.5 421.5 Z" fill="#141110"/>
</g>
<clipPath id="av1777475"><circle cx="1777.7" cy="475" r="14.1"/></clipPath><g clip-path="url(#av1777475)">
<circle cx="1777.7" cy="475" r="14.1" fill="#f6f5f4"/>
<path d="M1765.7 491 L1767.7 483 Q1777.7 479 1787.7 483 L1789.7 491 Z" fill="#6d6a68"/>
<rect x="1772.7" y="477" width="10" height="11" rx="3" fill="#e3c2b0"/>
<ellipse cx="1777.7" cy="471" rx="7.5" ry="10" fill="#dfb49c"/>
<path d="M1768.2 470 Q1767.7 462 1771.7 463 L1771.2 470 Z M1787.2 470 Q1787.7 462 1783.7 463 L1784.2 470 Z" fill="#8c8480"/>
<path d="M1774.2 476 Q1777.7 479 1781.2 476" stroke="#f4e6e0" stroke-width="1.6" fill="none"/>
</g>
<clipPath id="av1815519"><circle cx="1815.9" cy="519.2" r="14.1"/></clipPath><g clip-path="url(#av1815519)">
<circle cx="1815.9" cy="519.2" r="14.1" fill="#f6f5f4"/>
<path d="M1801.9 535.2 L1803.9 528.2 Q1807.9 525.2 1812.9 524.2 H1819.9 Q1824.9 525.2 1827.9 527.2 L1829.9 535.2 Z" fill="#2f3746"/>
<path d="M1811.9 524.2 L1815.9 535.2 L1820.9 524.2 Z" fill="#e9dcd3"/>
<ellipse cx="1809.4" cy="515.7" rx="2" ry="3" fill="#d4a486"/><ellipse cx="1822.9" cy="515.2" rx="1.8" ry="2.8" fill="#d4a486"/>
<path d="M1809.9 515.2 Q1809.4 505.70000000000005 1815.9 505.70000000000005 Q1822.4 505.70000000000005 1821.9 515.2 Z" fill="#d8aa8c"/>
<path d="M1809.9 514.7 H1821.9 V518.2 Q1821.9 526.2 1815.9 526.7 Q1809.9 526.2 1809.9 518.2 Z" fill="#8e6b57"/>
<rect x="1812.9" y="515.2" width="6" height="3" fill="#c99a7e"/>
<path d="M1809.9 510.70000000000005 H1822.4" stroke="#9a9a9a" stroke-width="1.2"/>
</g>
<clipPath id="av1855563"><circle cx="1855.2" cy="563.9" r="14.1"/></clipPath><g clip-path="url(#av1855563)">
<circle cx="1855.2" cy="563.9" r="14.1" fill="#f6f5f4"/>
<path d="M1843.2 579.9 L1845.2 572.9 Q1855.2 569.9 1865.2 572.9 L1867.2 579.9 Z" fill="#3b4250"/>
<rect x="1850.2" y="566.9" width="10" height="11" rx="3" fill="#8a5a45"/>
<ellipse cx="1855.2" cy="560.9" rx="8.5" ry="11" fill="#8f5d46"/>
<ellipse cx="1857.7" cy="553.9" rx="2.5" ry="1.8" fill="#c9a394"/>
<path d="M1851.7 565.1 Q1855.2 567.9 1858.7 565.1" stroke="#f1e2dc" stroke-width="1.8" fill="none"/>
</g>
<clipPath id="av2246653"><circle cx="2246.5" cy="653" r="14.1"/></clipPath><g clip-path="url(#av2246653)">
<circle cx="2246.5" cy="653" r="14.1" fill="#f6f5f4"/>
<path d="M2234.5 669 L2236.5 661 Q2246.5 657 2256.5 661 L2258.5 669 Z" fill="#6d6a68"/>
<rect x="2241.5" y="655" width="10" height="11" rx="3" fill="#e3c2b0"/>
<ellipse cx="2246.5" cy="649" rx="7.5" ry="10" fill="#dfb49c"/>
<path d="M2237.0 648 Q2236.5 640 2240.5 641 L2240.0 648 Z M2256.0 648 Q2256.5 640 2252.5 641 L2253.0 648 Z" fill="#8c8480"/>
<path d="M2243.0 654 Q2246.5 657 2250.0 654" stroke="#f4e6e0" stroke-width="1.6" fill="none"/>
</g>
<path d="M1636.50 352.06 H1643.10 V368.32" fill="none" stroke="#3a3a3a" stroke-width="2"/>
<path d="M1638.50 366.92 H1647.70 L1643.10 372.32 Z" fill="#3a3a3a"/>
<path d="M1715.00 396.22 H1721.00 V456.84" fill="none" stroke="#3a3a3a" stroke-width="2"/>
<path d="M1716.40 455.44 H1725.60 L1721.00 460.84 Z" fill="#3a3a3a"/>
<path d="M1910.20 440.78 H1916.70 V634.68" fill="none" stroke="#3a3a3a" stroke-width="2"/>
<path d="M1912.10 633.28 H1921.30 L1916.70 638.68 Z" fill="#3a3a3a"/>
<path d="M1753.30 485.14 H1760.60 V501.30" fill="none" stroke="#3a3a3a" stroke-width="2"/>
<path d="M1756.00 499.90 H1765.20 L1760.60 505.30 Z" fill="#3a3a3a"/>
<path d="M1831.50 574.56 H1877.60 V591.02" fill="none" stroke="#3a3a3a" stroke-width="2"/>
<path d="M1873.00 589.62 H1882.20 L1877.60 595.02 Z" fill="#3a3a3a"/>
</g>
</svg>
<div class="a" style="left:1580px;top:183px;width:5px;height:1164px;background:linear-gradient(to right,rgba(0,0,0,0.09),rgba(0,0,0,0.03))"></div>
<div class="a" style="left:1580px;top:82px;width:5px;height:98px;background:linear-gradient(to right,#dddddd,#ececec)"></div>
<svg class="a" style="left:1576px;top:120px" width="10" height="30" viewBox="1576 120 10 30"><text x="1577" y="145.8" text-anchor="middle" font-family="Liberation Sans, sans-serif" font-size="24" fill="#d1343a">S</text></svg>
<div class="a" style="left:1576px;top:82px;width:4px;height:1265px;background:#c6c6c6"></div>
<div class="a" style="left:1580px;top:180px;width:886px;height:3px;background:#475f96"></div>
<svg class="a" style="left:0;top:0" width="2560" height="66" viewBox="0 0 2560 66" fill="none" stroke-linecap="round" stroke-linejoin="round">
<path d="M28 17.3 H48 L54 23.5 V43.3 H28 Z" stroke="#c8c8c8" stroke-width="2.3"/>
<path d="M34.5 17.3 V25.5 H46 V17.3" stroke="#c8c8c8" stroke-width="2.3"/>
<path d="M33 43.3 V31 H49 V43.3" stroke="#c8c8c8" stroke-width="2.3"/>
<rect x="96.5" y="17" width="16.5" height="7" rx="1" stroke="#3d3d3d" stroke-width="2.3"/>
<path d="M96.5 37.5 H92 V24 H118 V37.5 H113.5" stroke="#3d3d3d" stroke-width="2.3"/>
<rect x="96.5" y="33" width="16.5" height="10.5" rx="1" stroke="#3d3d3d" stroke-width="2.3"/>
<path d="M109.5 28.5 H113" stroke="#3d3d3d" stroke-width="2.3"/>
<path d="M157 23.5 H171 A9.5 9.5 0 0 1 171 42.5 H166.5" stroke="#c8c8c8" stroke-width="2.3"/>
<path d="M162.5 17.5 L156.6 23.5 L162.5 29.5" stroke="#c8c8c8" stroke-width="2.3"/>
<path d="M245 23.5 H231 A9.5 9.5 0 0 0 231 42.5 H235.5" stroke="#c8c8c8" stroke-width="2.3"/>
<path d="M239.5 17.5 L245.4 23.5 L239.5 29.5" stroke="#c8c8c8" stroke-width="2.3"/>
<rect x="282.5" y="7.5" width="3" height="45.5" fill="#e2e2e2" stroke="none"/>
<rect x="756.5" y="7.5" width="3" height="45.5" fill="#e2e2e2" stroke="none"/>
<rect x="923.5" y="7.5" width="3" height="45.5" fill="#e2e2e2" stroke="none"/>
<rect x="1096.0" y="7.5" width="3" height="45.5" fill="#e2e2e2" stroke="none"/>
<rect x="1243.8" y="7.5" width="3" height="45.5" fill="#e2e2e2" stroke="none"/>
<rect x="1727.1" y="7.5" width="3" height="45.5" fill="#e2e2e2" stroke="none"/>
<rect x="323.3" y="17.3" width="17.5" height="5" rx="1.2" stroke="#3d3d3d" stroke-width="2.3"/>
<rect x="327.8" y="27.5" width="17.5" height="5.5" rx="1.2" stroke="#3d3d3d" stroke-width="2.3"/>
<rect x="332.3" y="38" width="17.5" height="5.3" rx="1.2" stroke="#3d3d3d" stroke-width="2.3"/>
<path d="M331 22.3 V27.5 M335.5 33 V38" stroke="#3d3d3d" stroke-width="2.3"/>
<path d="M514.8 25.5 H525.8 L520.3 32.5 Z" fill="#3d3d3d" stroke="none"/>
<path d="M710.8 25.5 H721.8 L716.3 32.5 Z" fill="#3d3d3d" stroke="none"/>
<path d="M1046.5 25.5 H1057.5 L1052 32.5 Z" fill="#c8c8c8" stroke="none"/>
<path d="M1194.2 25.5 H1205.2 L1199.7 32.5 Z" fill="#c8c8c8" stroke="none"/>
<path d="M1591.1 25.5 H1602.1 L1596.6 32.5 Z" fill="#c8c8c8" stroke="none"/>
<path d="M1685.3 25.5 H1696.3 L1690.8 32.5 Z" fill="#c8c8c8" stroke="none"/>
<path d="M583 21.5 H569 L578 31 V42.5 L583.5 41 V31.5 L590 25" stroke="#3d3d3d" stroke-width="2.3"/>
<path d="M592.5 16.5 L568 40.5" stroke="#3d3d3d" stroke-width="2.3"/>
<path d="M795.5 19 H823 M808.5 26 H822 M808.5 34 H822 M795.5 41 H823 M804 24.5 L798 30 L804 35.5" stroke="#c8c8c8" stroke-width="2.3"/>
<path d="M859.5 19 H887 M861 26 H874.5 M861 34 H874.5 M859.5 41 H887 M879.5 24.5 L885.5 30 L879.5 35.5" stroke="#c8c8c8" stroke-width="2.3"/>
<path d="M1288.5 20 H1298.5 A5.3 5.3 0 0 1 1298.5 30.6 H1288.5 Z M1288.5 30.6 H1299.5 A5 5 0 0 1 1299.5 40.6 H1288.5 Z" stroke="#c8c8c8" stroke-width="4"/>
<path d="M1356 19 H1370 M1351 41.5 H1365 M1363.5 19 L1357.5 41.5" stroke="#c8c8c8" stroke-width="2.3"/>
<path d="M1415.5 18.5 V29.5 A9 9 0 0 0 1433.5 29.5 V18.5 M1412.5 41 H1436.5" stroke="#c8c8c8" stroke-width="2.3"/>
<path d="M1497 24 C1496 16.5 1481 16.5 1481.5 24.5 C1482 30.5 1496.5 30 1496.5 37 C1496.5 43.5 1482 43.5 1481.5 37 M1477.5 30.5 H1500.5" stroke="#c8c8c8" stroke-width="2.3"/>
<path d="M1549.5 16.5 L1553 20 M1553 20 L1563.5 30.5 L1553 41 L1542 30 Z M1544 28 H1562" stroke="#c8c8c8" stroke-width="2.3"/>
<path d="M1565.8 33.5 Q1562.5 37.5 1563 39 A2.9 2.9 0 0 0 1568.6 39 Q1569 37.5 1565.8 33.5 Z" stroke="#c8c8c8" stroke-width="2"/>
<path d="M1637.5 40 L1649 16.5 L1660.5 40 M1641.5 32.5 H1656.5" stroke="#c8c8c8" stroke-width="2.3"/>
<rect x="1633" y="46.3" width="34" height="5.5" fill="#d0d0d0" stroke="none"/>
<circle cx="1769.8" cy="30" r="3.7" fill="#333" stroke="none"/>
<circle cx="1780.8" cy="30" r="3.7" fill="#333" stroke="none"/>
<circle cx="1791.8" cy="30" r="3.7" fill="#333" stroke="none"/>
<circle cx="2066.4" cy="27.3" r="10" stroke="#3d3d3d" stroke-width="2.4"/><path d="M2062 27.3 H2070.8 M2073.8 34.7 L2082.3 43.2" stroke="#3d3d3d" stroke-width="2.4"/>
<circle cx="2130.2" cy="27.3" r="10" stroke="#c8c8c8" stroke-width="2.4"/><path d="M2126 27.3 H2134.4 M2130.2 23.1 V31.5 M2137.6 34.7 L2146.1 43.2" stroke="#c8c8c8" stroke-width="2.4"/>
<rect x="2184.3" y="17" width="19.3" height="6.5" rx="1.3" stroke="#3d3d3d" stroke-width="2.3"/>
<path d="M2184.3 27.5 H2199.5 M2189 43 H2205" stroke="#3d3d3d" stroke-width="2.3"/>
<rect x="2191" y="31.8" width="19" height="6.8" rx="1.3" stroke="#3d3d3d" stroke-width="2.3"/>
<path d="M2387.3 22 V27.5 M2387.3 33 V38" stroke="#cd5c66" stroke-width="2.2"/>
<rect x="2373.1" y="16.2" width="19.6" height="6.8" rx="2.6" fill="#cd5c66" stroke="none"/>
<path d="M2376.1 19.6 H2389.7" stroke="#6b6b6b" stroke-width="1.7" stroke-linecap="butt"/>
<rect x="2377.8" y="26.9" width="19.6" height="6.8" rx="2.6" fill="#cd5c66" stroke="none"/>
<path d="M2380.8 30.3 H2394.4" stroke="#6b6b6b" stroke-width="1.7" stroke-linecap="butt"/>
<rect x="2382.0" y="37.7" width="19.6" height="6.8" rx="2.6" fill="#cd5c66" stroke="none"/>
<path d="M2385.0 41.1 H2398.6" stroke="#6b6b6b" stroke-width="1.7" stroke-linecap="butt"/>
<path d="M2457.89 20.96 L2458.68 17.06 L2465.72 17.06 L2466.51 20.96 L2468.05 21.84 L2471.82 20.58 L2475.34 26.68 L2472.36 29.31 L2472.36 31.09 L2475.34 33.72 L2471.82 39.82 L2468.05 38.56 L2466.51 39.44 L2465.72 43.34 L2458.68 43.34 L2457.89 39.44 L2456.35 38.56 L2452.58 39.82 L2449.06 33.72 L2452.04 31.09 L2452.04 29.31 L2449.06 26.68 L2452.58 20.58 L2456.35 21.84 Z" stroke="#3d3d3d" stroke-width="2.2"/><circle cx="2462.2" cy="30.2" r="4.1" stroke="#3d3d3d" stroke-width="2.2"/>
<path d="M2539 17.7 L2530 26.7 M2528.8 19.5 V27.2 H2536.8 M2514 42.5 L2522.8 33.7 M2515 33.2 H2523.3 V41.5" stroke="#3d3d3d" stroke-width="2.3"/>
</svg>
<div class="t" style="left:368px;top:18px;font-size:23.75px;font-weight:bold;color:#3d3d3d">Gantt View</div>
<div class="t" style="left:601px;top:18px;font-size:23.5px;font-weight:bold;color:#3d3d3d">Filter Off</div>
<div class="t" style="left:972px;top:16px;font-size:23.5px;font-weight:bold;color:#c8c8c8">Arial</div>
<div class="t" style="left:1144px;top:18px;font-size:23.5px;font-weight:bold;color:#c8c8c8">10</div>
<div class="t" style="left:2223px;top:18px;font-size:23.2px;font-weight:bold;color:#3d3d3d">Baselines</div>
<svg class="a" style="left:2466px;top:67px" width="94" height="1280" viewBox="2466 67 94 1280" fill="none" stroke="#3d3d3d" stroke-width="2.4" stroke-linecap="round" stroke-linejoin="round">
<path d="M2497.5 101.5 H2530 V124.5 H2509 L2503.5 129.5 V124.5 H2497.5 Z"/>
<path d="M2510.5 205 L2523.5 192 A4.5 4.5 0 0 0 2517 185.5 L2500 202.5 A8.5 8.5 0 0 0 2512 214.5 L2529 197.5 A12 12 0 0 0 2512.5 181"/>
<path d="M2506.5 268 H2521.5 M2503 273.5 H2525 M2497.5 278.5 H2530 V293 L2522 301 H2497.5 Z M2530 293 H2522 V301"/>
<path d="M2511.2 356.5 A13.7 13.7 0 0 1 2522.3 381.5 M2521.6 374.7 L2522.3 382.1 L2529.3 380.6 M2516 383.8 A13.7 13.7 0 0 1 2504.8 357.8 M2497.8 359.1 L2504.8 357.6 L2505.6 364.3 M2508.2 370.2 L2512.3 374.7 L2519 367.6" stroke-width="2.6"/>
<path d="M2500.5 439 H2519 L2527 447 V471.5 H2500.5 Z M2519 439 V447 H2527 M2513.8 466 V452 M2508.5 457 L2513.8 451.5 L2519 457"/>
<circle cx="2514" cy="540.5" r="16.5"/><path d="M2502 540.5 H2507.5 L2511 533 L2516 548 L2519.5 540.5 H2526"/>
<path d="M2505 611 H2530 V634 L2522 642 H2505 Z M2530 634 H2522 V642 M2497.5 614 H2510 V637 H2497.5 Z" fill="#fff"/><path d="M2501.5 621.5 H2506 M2501.5 626 H2506 M2501.5 630.5 H2506"/>
<path d="M2513.8 694.3 C2508 694.3 2505.2 699 2505.2 704 C2505.2 710 2510 715 2513.8 721 C2517.6 715 2522.3 710 2522.3 704 C2522.3 699 2519.6 694.3 2513.8 694.3 Z M2504.5 695.8 C2500 698.5 2499 702 2499.3 705 C2499.5 711 2505 716 2510.4 721 C2506 715 2502.2 710 2502.2 704.5 C2502.2 701 2503 698 2504.5 695.8 Z M2523 695.8 C2527.5 698.5 2528.5 702 2528.2 705 C2528 711 2522.5 716 2517.1 721 C2521.5 715 2525.3 710 2525.3 704.5 C2525.3 701 2524.5 698 2523 695.8 Z M2509.7 723.2 H2517.7 L2516.5 729.2 H2511 Z" fill="#444" stroke="none"/>
<rect x="2497.5" y="781" width="33" height="32"/><path d="M2506 804 V796 M2511.5 804 V787.5 M2517 804 V793 M2522.5 804 V799"/>
<rect x="2491" y="840" width="45.5" height="2" fill="#e4e4e4" stroke="none"/>
<rect x="2499.5" y="869.7" width="12.5" height="12.5" fill="#9a9a9a" stroke="none"/><rect x="2515.5" y="869.7" width="12.5" height="12.5" fill="#9a9a9a" stroke="none"/><rect x="2499.5" y="885.7" width="12.5" height="12.5" fill="#9a9a9a" stroke="none"/><rect x="2515.5" y="885.7" width="12.5" height="12.5" fill="#9a9a9a" stroke="none"/>
<path d="M2513.5 952 L2531 969.5 L2513.5 987 L2496 969.5 Z M2513.5 964.5 L2518.5 969.5 L2513.5 974.5 L2508.5 969.5 Z" fill="#9a9a9a" fill-rule="evenodd" stroke="none"/>
<path d="M2502 1067 C2496 1067 2494.5 1058 2500 1056 C2499 1049 2507 1046 2510 1050 C2513 1044 2521 1045 2522 1050 C2528 1048 2533 1054 2530 1059 C2532 1064 2527 1068 2523 1066 C2520 1069 2513 1069 2511 1066 C2508 1069 2504 1068 2502 1067 Z" fill="#9a9a9a" stroke="none"/>
</svg>
</body></html>
